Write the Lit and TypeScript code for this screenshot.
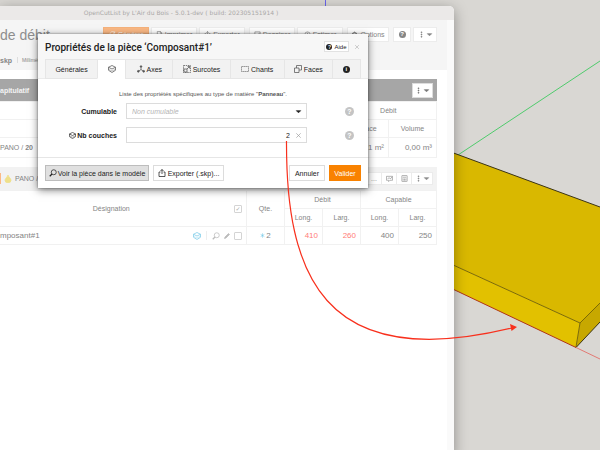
import { LitElement, html, css, svg, type TemplateResult } from "lit";
import { customElement, state } from "lit/decorators.js";
import { classMap } from "lit/directives/class-map.js";

const shapes: Record<string, TemplateResult> = {
  layers: svg`<path d="M8 1 15 4.500 8 8 1 4.500Z"/><path d="M1 4.500v6L8 15l7-4.500v-6"/><path d="M2 9l6 3 6-3" opacity="0.500"/>`,
  axes: svg`<path d="M8 2v7M8 9l-5 3.500M8 9l5 3.500"/><circle cx="8" cy="3" r="1.600" fill="currentColor"/><circle cx="2.600" cy="12.600" r="1.800" fill="currentColor"/><circle cx="13.400" cy="12.600" r="1.800" fill="currentColor"/>`,
  oversize: svg`<rect x="1" y="1" width="14" height="14" stroke-dasharray="3 1.500"/><rect x="2" y="8" width="6" height="6"/><path d="M8 8l5-5M9 3h4v4"/>`,
  edges: svg`<path d="M1 3h14v10H1z" stroke-dasharray="2.500 1.500"/>`,
  faces: svg`<path d="M1 6h9v9H1zM5 6V1h10v9h-5"/>`,
  search: svg`<circle cx="9.500" cy="6.500" r="5"/><path d="M6 10l-4.500 4.500" stroke-width="2.500"/>`,
  share: svg`<path d="M5 6H2v9h12V6h-3M8 10V1M5 4l3-3 3 3"/>`,
  pencil: svg`<path d="M3 13l1-3 7-7 2 2-7 7z" fill="currentColor"/>`,
  cog: svg`<circle cx="8" cy="8" r="4.500" stroke-width="3"/><path d="M8 1v3M8 12v3M1 8h3M12 8h3"/>`,
  page: svg`<path d="M3 1h7l3 3v11H3zM10 1v4h3"/>`,
  refresh: svg`<path d="M13 4A6 6 0 1 0 14 9M13 1v4H9"/>`,
  check: svg`<path d="M2 2h12v12H2zM5 8l2 3 6-7"/>`,
  clock: svg`<circle cx="8" cy="8" r="6"/><path d="M8 4v4h3"/>`,
  board: svg`<path d="M1 3h14v9H9l-3 3v-3H1zM4 9l3-3 3 3 4-5"/>`,
  calc: svg`<rect x="2" y="1" width="12" height="14" rx="1"/><path d="M4 5h8M5 8v5M8 8v5M11 8v5"/>`,
  close: svg`<path d="M3 3l10 10M13 3 3 13"/>`,
  star: svg`<path d="M8 1v14M2 4.500l12 7M14 4.500 2 11.500" stroke-width="2"/>`,
  drop: svg`<path d="M8 0C9 4 14 7 14 10.500A6 5 0 0 1 2 10.500C2 7 7 4 8 0Z" fill="currentColor"/>`,
  caret: svg`<path d="M3 6h10l-5 5z" fill="currentColor"/>`,
  dots: svg`<path d="M7 2h2v2H7zM7 7h2v2H7zM7 12h2v2H7z" fill="currentColor"/>`,
};

const icon = (name: string, tone = "") =>
  html`<svg class="icon ${tone}" viewBox="0 0 16 16" aria-hidden="true">${shapes[name]}</svg>`;

const shared = css`
  * { box-sizing: border-box; }
  button, input, select { font: inherit; color: inherit; margin: 0; }
  button { padding: 0; background: none; border: 0; white-space: nowrap; display: flex; align-items: center; justify-content: center; gap: 2px; }
  .icon { width: 8px; height: 8px; flex: none; fill: none; stroke: currentColor; stroke-width: 1.500; display: block; }
  .badge { display: flex; align-items: center; justify-content: center; flex: none; width: 7px; height: 7px; border-radius: 50%; background: currentColor; }
  .badge b { color: #fff; font-size: 6px; line-height: 7px; }
`;

@customElement("model-scene")
class ModelScene extends LitElement {
  static styles = css`
    :host { position: absolute; inset: 0; overflow: hidden; }
    svg { position: absolute; top: 0; right: 0; width: 600px; height: 450px; fill: none; stroke-width: 1; }
    .green { stroke: #4fcb6c; }
    .blue { stroke: #6a66f0; }
    .red { stroke: #b03418; }
    .axis { stroke: #e27a74; }
    .line { stroke: #3b3416; }
    .soft { stroke: #7c6a06; }
    .top { fill: #d9b800; }
    .front { fill: #e2c100; }
    .side { fill: #c7a800; }
  `;
  render() {
    return html`<svg viewBox="0 0 600 450" role="img" aria-label="Panneau 3D">
      <path class="blue" d="M325.500 0V8" />
      <path class="green" d="M458 155 600 61" />
      <path class="top" d="M440 148 600 207V303L580 323 440 259Z" />
      <path class="front" d="M440 259 580 323 576 347.500 440 283Z" />
      <path class="side" d="M580 323 600 303V322L576 347.500Z" />
      <path class="soft" d="M440 259 580 323 600 303M580 323 576 347" />
      <path class="line" d="M440 148 600 207M576 347.500 600 322" />
      <path class="red" d="M440 283 576 347.500" />
      <path class="axis" d="M576 347.500 600 359" />
    </svg>`;
  }
}

@customElement("cut-list")
class CutList extends LitElement {
  static styles = [shared, css`
    :host { display: flex; flex-direction: column; min-height: 100%; background: #fff; border-radius: 0 5px 0 0; overflow: hidden; color: #858585; font-size: 7px; }
    .titlebar { height: 14px; background: #ebe9e8; color: #aaa8a7; font: 6px/14px "DejaVu Sans", sans-serif; text-align: center; padding-right: 92px; white-space: nowrap; }
    .body { flex: 1; display: flex; }
    .page { flex: 1; min-width: 0; }
    .scroll { width: 7px; background: #fafafa; }
    .head { background: #f5f5f5; height: 50px; padding: 7px 10px 0 0; display: flex; flex-direction: column; gap: 12px; }
    .bar { display: flex; height: 15px; align-items: center; justify-content: space-between; }
    h1 { margin: 0; font-size: 14px; line-height: 16px; font-weight: 400; color: #8e8e8e; }
    .tools, .group { display: flex; }
    .tools { gap: 4px; }
    .group { gap: 2px; }
    .btn { height: 15px; background: #fff; border: 1px solid #ececec; min-width: 18px; }
    .wide { width: 46px; }
    .mid { width: 42px; }
    .menu { width: 24px; gap: 1px; }
    .menu.small { width: 21px; }
    .primary { background: #fbb985; border-color: #f5b27c; color: #fff; }
    .file { display: flex; height: 12px; align-items: center; gap: 5px; font-size: 5px; }
    .file b { font-size: 7px; }
    .file span { border-left: 1px solid #ddd; padding-left: 4px; }
    .content { padding: 9px 10px 0 0; display: flex; flex-direction: column; gap: 9px; }
    .strip { height: 22px; background: #a6a6a6; color: #f4f4f4; display: flex; align-items: center; justify-content: space-between; padding-right: 4px; font-size: 7px; font-weight: 700; }
    .strip .btn { color: #777; border-color: #ddd; }
    .strip.light { height: 23px; background: #f2f2f2; color: #858585; font-weight: 400; }
    .name { display: flex; align-items: center; gap: 3px; }
    .tag { width: 1px; height: 11px; background: #fbb985; }
    .set { display: flex; }
    .set .btn { height: 13px; width: 16px; min-width: 16px; border-color: #ebebeb; margin-left: -1px; color: #8c8c8c; }
    .set .menu { width: 22px; }
    table { width: 100%; border-collapse: collapse; table-layout: fixed; }
    th { font-weight: 400; }
    td, th { height: 18px; padding: 0 4px 0 0; border: 1px solid #f1f1f1; border-left: 0; }
    .center { padding: 0; text-align: center; }
    .num { font-size: 8px; text-align: right; }
    .tall td { height: 20px; }
    .plain { border-right: 0; }
    .title { padding: 0 0 0 38px; }
    .c38 { width: 38px; }
    .c48 { width: 48px; }
    .c62 { width: 62px; }
    .part { font-size: 8px; }
    .red { color: #ff7d78; }
    .actions { display: flex; align-items: center; justify-content: flex-end; gap: 3px; color: #bbb; }
    .actions .icon { width: 8px; height: 8px; }
    .sep { width: 1px; height: 9px; background: #eee; margin: 0 2px; }
    .tick { appearance: none; width: 8px; height: 8px; border: 1px solid #d4d4d4; border-radius: 1px; display: grid; place-content: center; }
    .tick:checked::before { content: "✓"; font: 6px/6px "DejaVu Sans", sans-serif; color: #aaa; }
    .sky.sky { color: #7ccbe8; }
    .yellow.yellow { color: #efe08a; width: 8px; height: 8px; }
    .qty { display: flex; align-items: center; justify-content: center; gap: 1px; font-size: 8px; }
    .icon { width: 7px; height: 7px; }
    .qty .icon { width: 5px; height: 5px; }
  `];
  render() {
    const menu = (extra = "") => html`<button class="btn menu ${extra}" aria-label="Menu">${icon("dots")}${icon("caret")}</button>`;
    return html`
      <div class="titlebar">OpenCutList by L'Air du Bois - 5.0.1-dev ( build: 202305151914 )</div>
      <div class="body">
        <div class="page">
          <header class="head">
            <div class="bar">
              <h1>de débit</h1>
              <div class="tools">
                <div class="group">
                  <button class="btn wide primary">${icon("refresh")}Générer</button>
                  <button class="btn wide">${icon("page")}Imprimer</button>
                  <button class="btn wide">${icon("share")}Exporter</button>
                </div>
                <div class="group">
                  <button class="btn wide">${icon("check")}Dessiner</button>
                  <button class="btn wide">${icon("clock")}Estimer</button>
                </div>
                <button class="btn mid">${icon("cog")}Options</button>
                <div class="group">
                  <button class="btn" aria-label="Aide"><span class="badge"><b>?</b></span></button>
                  ${menu()}
                </div>
              </div>
            </div>
            <div class="file"><b>skp</b><span>Millimètres</span></div>
          </header>
          <div class="content">
            <section>
              <div class="strip">apitulatif ${menu("small")}</div>
              <table>
                <colgroup><col /><col class="c48" /><col class="c48" /></colgroup>
                <tr><th class="plain"></th><th class="center" colspan="2">Débit</th></tr>
                <tr><th></th><th class="center">Surface</th><th class="center">Volume</th></tr>
                <tr class="tall"><td>PANO / <b>20</b></td><td class="num">0,21 m²</td><td class="num">0,00 m³</td></tr>
              </table>
            </section>
            <section>
              <div class="strip light">
                <span class="name"><i class="tag"></i>${icon("drop", "yellow")}PANO / 20</span>
                <div class="set">
                  <button class="btn" aria-label="Plus">...</button>
                  <button class="btn" aria-label="Étiquettes">${icon("board")}</button>
                  <button class="btn" aria-label="Calepinage">${icon("calc")}</button>
                  ${menu()}
                </div>
              </div>
              <table>
                <colgroup><col /><col class="c62" /><col class="c38" /><col class="c38" /><col class="c38" /><col class="c38" /><col class="c38" /></colgroup>
                <tr>
                  <th class="plain title" rowspan="2">Désignation</th>
                  <th rowspan="2"><div class="actions"><input class="tick" type="checkbox" checked aria-label="Tout" /></div></th>
                  <th class="center" rowspan="2">Qte.</th>
                  <th class="center" colspan="2">Débit</th>
                  <th class="center" colspan="2">Capable</th>
                </tr>
                <tr><th class="center">Long.</th><th class="center">Larg.</th><th class="center">Long.</th><th class="center">Larg.</th></tr>
                <tr>
                  <td class="plain part">mposant#1</td>
                  <td><div class="actions">${icon("layers", "sky")}<i class="sep"></i>${icon("search")}${icon("pencil")}<input class="tick" type="checkbox" aria-label="Composant#1" /></div></td>
                  <td class="center"><span class="qty">${icon("star", "sky")}2</span></td>
                  <td class="num red">410</td><td class="num red">260</td><td class="num">400</td><td class="num">250</td>
                </tr>
              </table>
            </section>
          </div>
        </div>
        <div class="scroll"></div>
      </div>`;
  }
}

@customElement("part-dialog")
class PartDialog extends LitElement {
  @state() private active = 1;
  private tabs: [string, string][] = [["", "Générales"], ["layers", ""], ["axes", "Axes"], ["oversize", "Surcotes"], ["edges", "Chants"], ["faces", "Faces"], ["info", ""]];
  static styles = [shared, css`
    :host { display: block; background: #fff; color: #222; font-size: 7px; box-shadow: 0 2px 8px rgba(0, 0, 0, 0.5), 0 0 2px rgba(0, 0, 0, 0.4); }
    .head { background: #f7f7f7; padding: 0 7px; border-bottom: 1px solid #ebebeb; }
    .top { height: 25px; display: flex; align-items: center; gap: 4px; }
    h2 { flex: 1; margin: 0; padding-top: 2px; font: 500 10px/14px Roboto, "Liberation Sans", sans-serif; }
    .help { width: 25px; height: 11px; border: 1px solid #e2e2e2; background: #fff; font-size: 6px; }
    .help .badge { width: 6px; height: 6px; }
    .help .badge b { font-size: 5px; line-height: 6px; }
    .x { width: 8px; color: #aaa; }
    .x .icon { width: 6px; height: 6px; }
    .tabs { display: grid; grid-template-columns: 52fr 28fr 47fr 57fr 54fr 48fr 29fr; margin-bottom: -1px; }
    .tab { height: 20px; background: #f2f2f2; border: 1px solid #e6e6e6; border-right: 0; }
    .tab .icon { color: #555; }
    .tab:last-child { border-right: 1px solid #e6e6e6; }
    .tab.on { background: #fff; border-bottom-color: #fff; }
    .body { padding: 11px 0 14px; display: flex; flex-direction: column; gap: 8px; }
    .note { margin: 0 0 -3px; text-align: center; font-size: 6px; line-height: 8px; color: #555; }
    .row { display: grid; grid-template-columns: 79px 1fr 52px; column-gap: 9px; align-items: center; }
    .row label { font-weight: 700; display: flex; justify-content: flex-end; align-items: center; gap: 1px; white-space: nowrap; }
    .row label .icon { width: 7px; height: 7px; }
    .side { color: #c4c4c4; display: flex; padding-left: 29px; }
    .side .badge { width: 9px; height: 9px; }
    .side .badge b { font-size: 7px; line-height: 9px; }
    .field { position: relative; height: 16px; border: 1px solid #dcdcdc; display: flex; }
    .control { flex: 1; min-width: 0; appearance: none; border: 0; background: none; padding: 0 5px; outline: 0; }
    .empty { font-style: italic; color: #b5b5b5; }
    .right { text-align: right; padding-right: 16px; }
    .end { position: absolute; right: 4px; top: 4px; width: 7px; height: 7px; }
    .end .icon { width: 7px; height: 7px; }
    .faint { color: #999; }
    .foot { border-top: 1px solid #e6e6e6; padding: 7px; display: flex; gap: 4px; }
    .btn { height: 16px; border: 1px solid #dcdcdc; background: #fff; width: 36px; }
    .locate { width: 104px; gap: 1px; background: #e0e0e0; border-color: #bdbdbd; }
    .export { width: 71px; margin-right: auto; }
    .ok { width: 32px; background: #f98200; border-color: #f98200; color: #fff; }
  `];
  render() {
    return html`
      <header class="head">
        <div class="top">
          <h2>Propriétés de la pièce ‘Composant#1’</h2>
          <button class="help"><span class="badge"><b>?</b></span>Aide</button>
          <button class="x" aria-label="Fermer">${icon("close")}</button>
        </div>
        <div class="tabs" role="tablist">
          ${this.tabs.map(([glyph, text], i) => html`
            <button role="tab" aria-label=${text || glyph} aria-selected=${i === this.active} class=${classMap({ tab: true, on: i === this.active })} @click=${() => (this.active = i)}>
              ${glyph === "info" ? html`<span class="badge"><b>i</b></span>` : glyph ? icon(glyph) : ""}${text}
            </button>`)}
        </div>
      </header>
      <div class="body">
        <p class="note">Liste des propriétés spécifiques au type de matière "<b>Panneau</b>".</p>
        <div class="row">
          <label for="cumul">Cumulable</label>
          <div class="field"><select id="cumul" class="control empty"><option>Non cumulable</option></select><span class="end">${icon("caret")}</span></div>
          <span class="side"><span class="badge"><b>?</b></span></span>
        </div>
        <div class="row">
          <label for="layers">${icon("layers")}Nb couches</label>
          <div class="field"><input id="layers" class="control right" value="2" /><button class="end faint" aria-label="Effacer">${icon("close")}</button></div>
          <span class="side"><span class="badge"><b>?</b></span></span>
        </div>
      </div>
      <footer class="foot">
        <button class="btn locate">${icon("search")}Voir la pièce dans le modèle</button>
        <button class="btn export">${icon("share")}Exporter (.skp)...</button>
        <button class="btn">Annuler</button>
        <button class="btn ok">Valider</button>
      </footer>`;
  }
}

@customElement("app-root")
class AppRoot extends LitElement {
  static styles = css`
    :host { display: block; position: relative; min-height: 100vh; overflow: hidden; background: #d9d7d3; font-family: "Liberation Sans", Arial, sans-serif; }
    .window { position: absolute; top: 6px; left: 0; right: 146px; bottom: 0; border-radius: 0 5px 0 0; box-shadow: 0 3px 14px rgba(0, 0, 0, 0.35); }
    .dialog { position: absolute; top: 34px; left: 38px; width: 330px; }
    .arrow { position: absolute; top: 0; left: 0; width: 600px; height: 450px; fill: none; stroke: #f8301d; stroke-width: 1.200; pointer-events: none; }
    .tip { fill: #f8301d; stroke: none; }
  `;
  render() {
    return html`
      <model-scene></model-scene>
      <cut-list class="window"></cut-list>
      <part-dialog class="dialog"></part-dialog>
      <svg class="arrow" viewBox="0 0 600 450" aria-hidden="true">
        <path d="M286.500 141C286 270 320 375 512 328" />
        <path class="tip" d="M517 327 510 324 511.500 331Z" />
      </svg>`;
  }
}
